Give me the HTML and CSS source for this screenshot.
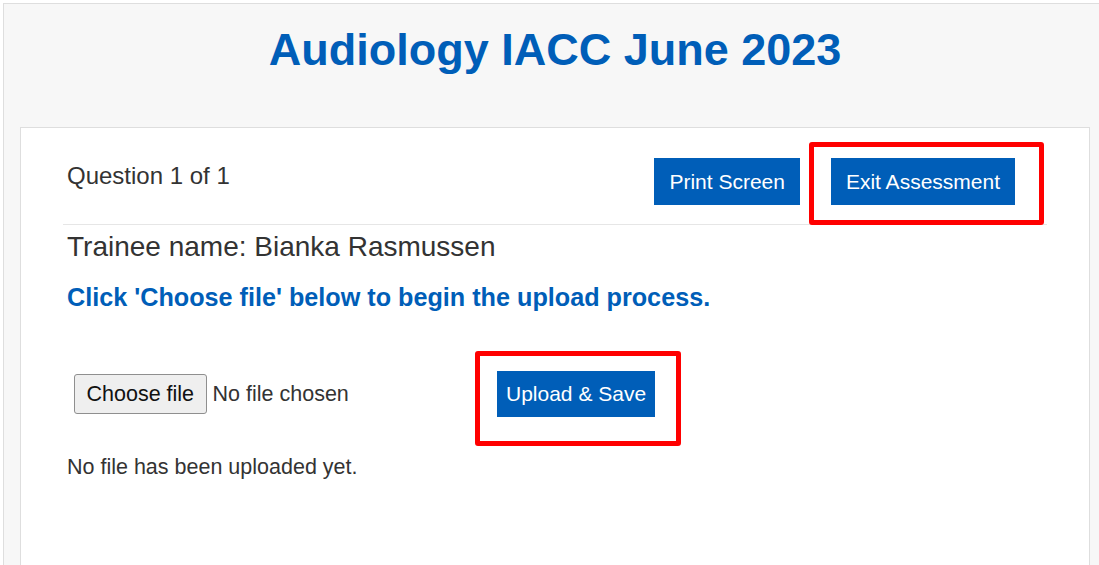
FILE: index.html
```html
<!DOCTYPE html>
<html lang="en">
<head>
  <meta charset="UTF-8">
  <title>Audiology IACC June 2023</title>
  <link rel="stylesheet" href="styles.css">
</head>
<body>
  <div class="page">
    <header class="page-head">
      <h1>Audiology IACC June 2023</h1>
    </header>

    <main class="card">
      <div class="q-row">
        <div class="q-count">Question 1 of 1</div>
        <div class="q-actions">
          <button class="btn">Print Screen</button>
          <span class="marked mark-exit"><button class="btn">Exit Assessment</button></span>
        </div>
      </div>

      <p class="trainee">Trainee name: Bianka Rasmussen</p>
      <p class="hint">Click 'Choose file' below to begin the upload process.</p>

      <div class="upload-row">
        <label class="file-pick">
          <span class="file-btn">Choose file</span>
          <span class="file-name">No file chosen</span>
        </label>
        <span class="marked mark-upload"><button class="btn btn-upload">Upload &amp; Save</button></span>
      </div>

      <p class="status">No file has been uploaded yet.</p>
    </main>
  </div>
</body>
</html>
```

FILE: styles.css
```css
:root{
  --blue:#005eb8;
  --text:#333;
  --line:#dedede;
}
*{box-sizing:border-box;margin:0;padding:0;}
html,body{overflow:hidden;background:#fff;}
body{font-family:'Liberation Sans',Arial,sans-serif;color:var(--text);}

.page{width:1104px;margin:3px 0 0 3px;background:#f7f7f7;border:1px solid var(--line);padding:0 16px;}
.page-head{padding:20px 0 51px;text-align:center;}
h1{font-size:45px;line-height:52px;font-weight:700;color:var(--blue);}

.card{background:#fff;border:1px solid var(--line);padding:30px 45px 200px 46px;}

/* question header */
.q-row{display:flex;justify-content:space-between;align-items:flex-start;margin:0 -3px 0 -4px;padding:0 3px 19px 4px;border-bottom:1px solid #e6e6e6;}
.q-count{font-size:24px;line-height:28px;padding-top:4px;}
.q-actions{display:flex;gap:31px;margin-right:29px;}

.btn{font-family:inherit;font-size:21px;line-height:25px;padding:11px 15px;background:var(--blue);color:#fff;border:none;border-radius:0;cursor:pointer;}
.btn-upload{line-height:24px;padding:11px 9px;}

/* red annotation boxes */
.marked{position:relative;display:inline-block;}
.marked::after{content:"";position:absolute;border:5px solid #f00;border-radius:3px;pointer-events:none;}
.mark-exit::after{top:-16px;left:-22px;right:-29px;bottom:-20px;}
.mark-upload::after{top:-20px;left:-22px;right:-26px;bottom:-29px;}

.trainee{font-size:28px;line-height:32px;margin-top:6px;}
.hint{font-size:25.2px;line-height:28px;font-weight:700;color:var(--blue);margin-top:20px;}

/* upload */
.upload-row{display:flex;align-items:center;margin-top:60px;}
.file-pick{display:flex;align-items:center;gap:6px;margin-left:7px;width:423px;font-size:21.5px;}
.file-btn{display:inline-block;line-height:24px;padding:7px 11.5px;background:#efefef;border:1px solid #8f8f8f;border-radius:3px;color:#111;}
.file-name{color:var(--text);}

.status{font-size:21.5px;line-height:24px;margin-top:38px;}
```
